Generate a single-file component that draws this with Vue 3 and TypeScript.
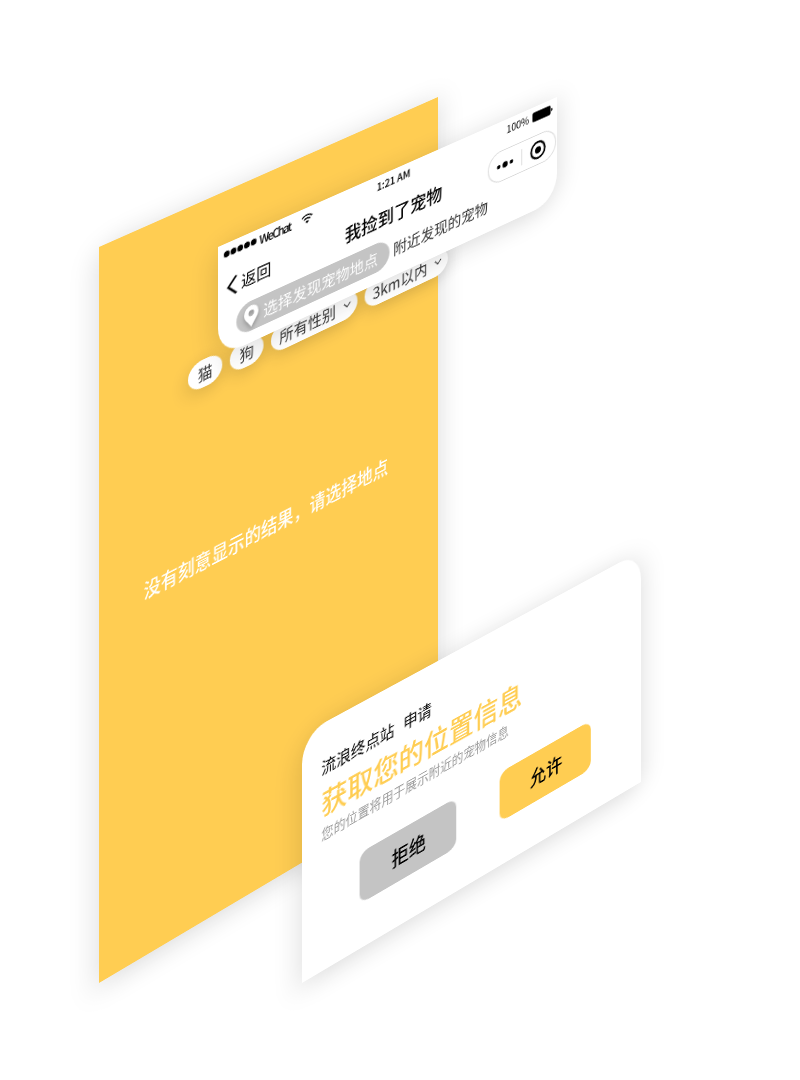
<script setup lang="ts">
const signalDots = [1, 2, 3, 4, 5]

interface Chip {
  label: string
  dropdown: boolean
}

const chips: Chip[] = [
  { label: '猫', dropdown: false },
  { label: '狗', dropdown: false },
  { label: '所有性别', dropdown: true },
  { label: '3km以内', dropdown: true },
]
</script>

<template>
  <main class="stage">
    <section class="plane plane-screen">
      <p class="empty tall">没有刻意显示的结果，请选择地点</p>
    </section>

    <section class="plane plane-chips">
      <div class="chips">
        <div v-for="c in chips" :key="c.label" class="chip" :class="{ wide: c.dropdown }">
          <span class="tall">{{ c.label }}</span>
          <svg v-if="c.dropdown" class="caret tall" viewBox="0 0 10 6" width="9" height="6">
            <path d="M1 1l4 4 4-4" fill="none" stroke="#333" stroke-width="1.2" />
          </svg>
        </div>
      </div>
    </section>

    <section class="plane plane-header">
      <header class="header">
        <div class="status tall">
          <div class="status-left">
            <div class="signal"><i v-for="d in signalDots" :key="d"></i></div>
            <span class="carrier">WeChat</span>
            <svg class="wifi" viewBox="0 0 14 11" width="13" height="10">
              <g fill="none" stroke="#000" stroke-width="1.6">
                <path d="M1 4.2a8.6 8.6 0 0 1 12 0" />
                <path d="M3.4 6.6a5.2 5.2 0 0 1 7.2 0" />
              </g>
              <path d="M7 10.8L5 8.7a2.9 2.9 0 0 1 4 0z" />
            </svg>
          </div>
          <span class="time">1:21 AM</span>
          <div class="status-right">
            <span class="percent">100%</span>
            <svg viewBox="0 0 24 10" width="24" height="10">
              <rect x="0" y="0" width="21.5" height="10" rx="2" />
              <path d="M22.2 3.2q1.5.4 1.5 1.8t-1.5 1.8z" />
            </svg>
          </div>
        </div>

        <div class="nav">
          <div class="back">
            <svg viewBox="0 0 11 22" width="11" height="22">
              <path d="M10 1.2L1.6 11l8.4 9.8" fill="none" stroke="#000" stroke-width="2.2" />
            </svg>
            <span class="tall">返回</span>
          </div>
          <h1 class="title tall">我捡到了宠物</h1>
          <div class="capsule">
            <svg class="tall" viewBox="0 0 20 8" width="20" height="8">
              <circle cx="2.6" cy="4" r="2" />
              <circle cx="10" cy="4" r="3" />
              <circle cx="17.4" cy="4" r="2" />
            </svg>
            <i class="divider"></i>
            <svg class="tall" viewBox="0 0 20 20" width="19" height="19">
              <circle cx="10" cy="10" r="8.5" fill="none" stroke="#000" stroke-width="2.2" />
              <circle cx="10" cy="10" r="3.7" />
            </svg>
          </div>
        </div>

        <div class="search">
          <div class="pill">
            <svg class="pin" viewBox="0 0 16 22" width="15" height="24" preserveAspectRatio="none">
              <path
                d="M8 0a8 8 0 0 0-8 8c0 5 5 9 8 14 3-5 8-9 8-14a8 8 0 0 0-8-8zm0 4.8a3.1 3.1 0 1 1 0 6.2 3.1 3.1 0 0 1 0-6.2z"
                fill="#fff"
                fill-rule="evenodd"
              />
            </svg>
            <span class="tall">选择发现宠物地点</span>
          </div>
          <span class="nearby tall">附近发现的宠物</span>
        </div>
      </header>
    </section>

    <section class="plane plane-dialog">
      <div class="dialog">
        <p class="who tall"><span>流浪终点站</span><span>申请</span></p>
        <h2 class="ask tall">获取您的位置信息</h2>
        <p class="why tall">您的位置将用于展示附近的宠物信息</p>
        <div class="actions">
          <button class="btn deny" type="button"><span class="tall">拒绝</span></button>
          <button class="btn allow" type="button"><span class="tall">允许</span></button>
        </div>
      </div>
    </section>
  </main>
</template>

<style>
body {
  margin: 0;
  background: #fff;
}
</style>

<style scoped>
.stage {
  position: relative;
  width: 800px;
  height: 1080px;
  overflow: hidden;
  background: #fff;
  font-family: 'Noto Sans CJK SC', 'Noto Sans', sans-serif;
  color: #000;
}

/* Every layer is a 375x812 phone screen seen through the same perspective. */
.plane {
  position: absolute;
  top: 97px;
  width: 375px;
  height: 812px;
  display: flex;
  flex-direction: column;
  transform-origin: 0 0;
  transform: matrix3d(0.9713, -0.4, 0, 0.0001987, 0, 0.9064, 0, 0, 0, 0, 1, 0, 0, 150, 0, 1);
}

.tall {
  display: block;
  transform: scaleY(1.17);
}

.plane-screen {
  left: 99px;
  align-items: center;
  justify-content: center;
  background: #ffcd52;
  box-shadow: 0 4px 30px rgba(0, 0, 0, 0.15);
}

.empty {
  margin: 0;
  padding: 0 12px 2px 0;
  font-size: 18px;
  line-height: 26px;
  font-weight: 500;
  color: #fff;
  white-space: nowrap;
}

.plane-chips {
  left: 159px;
}

.chips {
  display: flex;
  gap: 8px;
  margin: 147px 0 0 30px;
}

.chip {
  box-sizing: border-box;
  display: flex;
  align-items: center;
  justify-content: center;
  width: 36px;
  height: 31px;
  padding-bottom: 2px;
  border-radius: 16px;
  background: #fff;
  box-shadow: 0 4px 20px rgba(0, 0, 0, 0.16);
  font-size: 15.5px;
  line-height: 24px;
  color: #333;
  white-space: nowrap;
}

.chip.wide {
  width: 95px;
  justify-content: space-between;
  padding: 0 7px 2px 9px;
}

.plane-header {
  left: 218px;
}

.header {
  height: 122px;
  border-radius: 0 0 26px 26px / 0 0 32px 32px;
  background: #fff;
  box-shadow: 0 4px 30px rgba(0, 0, 0, 0.15);
}

.status {
  display: grid;
  grid-template-columns: 1fr auto 1fr;
  align-items: center;
  height: 24px;
  padding: 0 6px;
}

.status-left,
.status-right,
.signal {
  display: flex;
  align-items: center;
}

.status-right {
  justify-content: flex-end;
  gap: 4px;
  margin-right: -1px;
}

.signal {
  gap: 1px;
}

.signal i {
  width: 6px;
  height: 6px;
  border-radius: 50%;
  background: #000;
}

.carrier {
  margin-left: 3px;
  font-size: 11.5px;
  line-height: 16px;
  letter-spacing: -1.6px;
  font-weight: 500;
}

.wifi {
  margin-left: 11px;
}

.time {
  font-size: 10.5px;
  line-height: 16px;
  letter-spacing: -0.2px;
  font-weight: 500;
}

.percent {
  font-size: 10.5px;
  line-height: 16px;
  letter-spacing: -0.2px;
}

.nav {
  display: grid;
  grid-template-columns: 1fr auto 1fr;
  align-items: center;
  height: 52px;
  padding: 0 1px 0 9px;
}

.back {
  display: flex;
  align-items: center;
  gap: 4px;
  font-size: 15.7px;
  line-height: 24px;
}

.title {
  margin: 0 7px 0 0;
  font-size: 18px;
  line-height: 26px;
  font-weight: 500;
}

.capsule {
  box-sizing: border-box;
  justify-self: end;
  display: flex;
  align-items: center;
  justify-content: space-between;
  width: 80px;
  height: 36px;
  padding: 0 11px 0 9px;
  margin-top: 4px;
  border: 1px solid #d8d8d8;
  border-radius: 16px / 18px;
}

.divider {
  width: 1px;
  height: 19px;
  background: #d8d8d8;
}

.search {
  display: flex;
  align-items: center;
  gap: 4px;
  padding-left: 19px;
}

.pill {
  box-sizing: border-box;
  display: flex;
  align-items: center;
  gap: 5px;
  width: 164px;
  height: 33px;
  padding: 0 0 2px 8px;
  border-radius: 16px / 17px;
  background: #c4c4c4;
  color: #fff;
  font-size: 15.4px;
  line-height: 24px;
  white-space: nowrap;
}

.pin {
  margin-top: 2px;
  filter: drop-shadow(0 3px 2px rgba(0, 0, 0, 0.25));
}

.nearby {
  padding-bottom: 3px;
  font-size: 15.3px;
  line-height: 24px;
  color: #333;
  white-space: nowrap;
}

.plane-dialog {
  left: 302px;
  justify-content: flex-end;
}

.dialog {
  box-sizing: border-box;
  height: 274px;
  padding: 37px 20px 0;
  border-radius: 25px 25px 0 0 / 33px 33px 0 0;
  background: #fff;
  box-shadow: 0 4px 30px rgba(0, 0, 0, 0.15);
}

.who {
  display: flex;
  gap: 9.5px;
  margin: 0;
  font-size: 15.4px;
  line-height: 24px;
}

.ask {
  margin: 7px 0 0;
  font-size: 27.2px;
  line-height: 40px;
  font-weight: 500;
  color: #ffcd52;
}

.why {
  margin: 6px 0 0;
  font-size: 12.65px;
  line-height: 18px;
  color: #999;
}

.actions {
  display: flex;
  gap: 48px;
  margin: 35px 0 0 40px;
}

.btn {
  width: 104px;
  height: 57px;
  padding: 0 0 2px 1px;
  border: 0;
  border-radius: 10px;
  font-family: inherit;
  font-size: 18.5px;
  line-height: 28px;
  font-weight: 500;
  color: #000;
}

.deny {
  background: #c4c4c4;
}

.allow {
  background: #ffcd52;
}
</style>
